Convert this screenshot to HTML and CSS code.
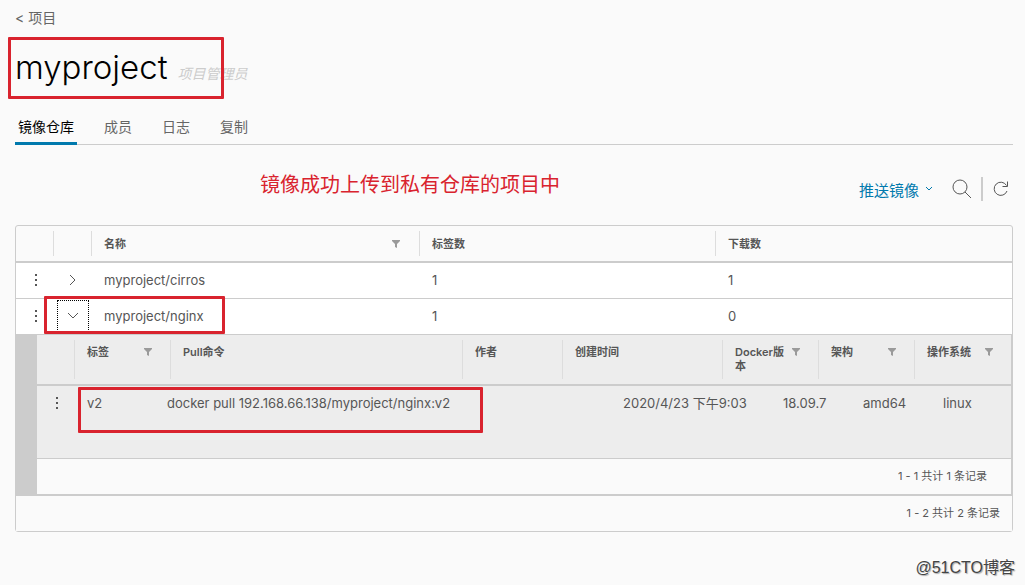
FILE: index.html
```html
<!DOCTYPE html>
<html lang="zh-CN">
<head>
  <meta charset="UTF-8">
  <meta name="viewport" content="width=device-width, initial-scale=1.0">
  <title>myproject</title>
  <link rel="stylesheet" href="styles.css">
</head>
<body>

<!-- shared icons -->
<svg class="sprite" aria-hidden="true">
  <symbol id="kebab" viewBox="0 0 4 14">
    <rect x="1" y="0" width="2" height="2"/><rect x="1" y="5" width="2" height="2"/><rect x="1" y="10" width="2" height="2"/>
  </symbol>
  <symbol id="filter" viewBox="0 0 8 8">
    <path d="M0 0h8v1L5 4v4L3 7V4L0 1z"/>
  </symbol>
</svg>

<main class="page">
  <a class="back" href="#">&lt; 项目</a>

  <div class="title">
    <h1>myproject</h1>
    <em>项目管理员</em>
    <span class="mark mark-title"></span>
  </div>

  <nav class="tabs">
    <a class="active" href="#">镜像仓库</a>
    <a href="#">成员</a>
    <a href="#">日志</a>
    <a href="#">复制</a>
  </nav>

  <div class="toolbar">
    <span class="note">镜像成功上传到私有仓库的项目中</span>
    <button class="push" type="button">推送镜像
      <svg width="8" height="6" viewBox="0 0 8 6"><path d="M1 1l3 3 3-3"/></svg>
    </button>
    <button class="search" type="button" aria-label="搜索">
      <svg width="20" height="20" viewBox="0 0 20 20"><circle cx="8" cy="8" r="7"/><path d="M13 13l6 6"/></svg>
    </button>
    <button class="refresh" type="button" aria-label="刷新">
      <svg width="16" height="16" viewBox="0 0 16 16"><path d="M14 10A6.600 6.600 0 1 1 13.500 4.500M14.500 0.500V5.500H9.500"/></svg>
    </button>
  </div>

  <div class="datagrid">
    <table class="repos">
      <thead>
        <tr>
          <th></th>
          <th><div></div></th>
          <th><div>名称 <button type="button" aria-label="筛选名称"><svg><use href="#filter"/></svg></button></div></th>
          <th><div>标签数</div></th>
          <th><div>下载数</div></th>
        </tr>
      </thead>
      <tbody>
        <tr>
          <td><button class="kebab" type="button" aria-label="操作"><svg><use href="#kebab"/></svg></button></td>
          <td><button class="caret" type="button" aria-label="展开"><svg width="8" height="12" viewBox="0 0 8 12"><path d="M1 1l5 5-5 5"/></svg></button></td>
          <td>myproject/cirros</td>
          <td>1</td>
          <td>1</td>
        </tr>
        <tr>
          <td><button class="kebab" type="button" aria-label="操作"><svg><use href="#kebab"/></svg></button></td>
          <td><span class="mark mark-repo"></span><button class="caret open" type="button" aria-label="收起"><svg width="12" height="8" viewBox="0 0 12 8"><path d="M1 1l5 5 5-5"/></svg></button></td>
          <td>myproject/nginx</td>
          <td>1</td>
          <td>0</td>
        </tr>
      </tbody>
    </table>

    <div class="detail">
      <table class="tags">
        <thead>
          <tr>
            <th></th>
            <th><span>标签</span><button type="button" aria-label="筛选标签"><svg><use href="#filter"/></svg></button></th>
            <th>Pull命令</th>
            <th>作者</th>
            <th>创建时间</th>
            <th><span>Docker版本</span><button type="button" aria-label="筛选Docker版本"><svg><use href="#filter"/></svg></button></th>
            <th><span>架构</span><button type="button" aria-label="筛选架构"><svg><use href="#filter"/></svg></button></th>
            <th><span>操作系统</span><button type="button" aria-label="筛选操作系统"><svg><use href="#filter"/></svg></button></th>
          </tr>
        </thead>
        <tbody>
          <tr>
            <td><span class="mark mark-tag"></span><button class="kebab" type="button" aria-label="操作"><svg><use href="#kebab"/></svg></button></td>
            <td>v2</td>
            <td>docker pull 192.168.66.138/myproject/nginx:v2</td>
            <td></td>
            <td>2020/4/23 下午9:03</td>
            <td>18.09.7</td>
            <td>amd64</td>
            <td>linux</td>
          </tr>
        </tbody>
      </table>
      <div class="count">1 - 1 共计 1 条记录</div>
    </div>

    <div class="count total">1 - 2 共计 2 条记录</div>
  </div>
</main>

<div class="watermark">@51CTO博客</div>

</body>
</html>
```
FILE: styles.css
```css
* {
    box-sizing: border-box;
}

body {
    margin: 0;
    min-height: 100vh;
    position: relative;
    background-color: #fafafa;
    color: #565656;
    font-family: Inter, "Noto Sans CJK SC", sans-serif;
    font-size: 13px;
}

.sprite {
    display: none;
}

.page {
    padding: 8px 12px 0 15px;
}

a {
    text-decoration: none;
    color: #666;
}

button {
    background: none;
    border: 0;
    padding: 0;
    color: inherit;
    font-family: inherit;
    display: flex;
    align-items: center;
    justify-content: center;
}

svg {
    fill: none;
    stroke: currentColor;
}

.back {
    display: block;
    font-size: 14px;
    line-height: 20px;
}

.title {
    position: relative;
    display: flex;
    align-items: baseline;
    gap: 10px;
    margin-top: 16px;
    height: 64px;
}

.title h1 {
    margin: 0;
    font-size: 33px;
    font-weight: 300;
    line-height: 46px;
    color: #000;
}

.title em {
    font-size: 14px;
    color: #ccc;
}

/* red frames */
.mark {
    position: absolute;
    border: 3px solid #d9232e;
    border-radius: 1px;
    pointer-events: none;
}

.mark-title {
    left: -7px;
    top: -7px;
    width: 216px;
    height: 62px;
}

.mark-repo {
    left: -9px;
    top: -3px;
    width: 181px;
    height: 38px;
}

.mark-tag {
    left: 41px;
    top: 1px;
    width: 405px;
    height: 46px;
}

.tabs {
    display: flex;
    gap: 24px;
    height: 37px;
    border-bottom: 1px solid #ccc;
}

.tabs a {
    height: 37px;
    padding: 0 3px;
    font-size: 14px;
    line-height: 38px;
}

.tabs .active {
    color: #000;
    border-bottom: 3px solid #0079ad;
}

.toolbar {
    position: relative;
    display: flex;
    justify-content: flex-end;
    align-items: center;
    height: 80px;
    padding: 8px 4px 0 0;
}

.note {
    position: absolute;
    left: 245px;
    top: 25px;
    font-size: 20px;
    line-height: 30px;
    color: #d9232e;
}

.push {
    gap: 6px;
    font-size: 15px;
    color: #0079ad;
}

.search {
    margin-left: 19px;
    padding-right: 9px;
}

.refresh {
    height: 24px;
    padding-left: 10px;
    border-left: 2px solid #ccc;
}

.datagrid {
    border: 1px solid #ccc;
    border-radius: 3px;
}

table {
    width: 100%;
    border-collapse: collapse;
}

tr {
    display: grid;
}

th {
    font-size: 11px;
    font-weight: 600;
    line-height: 14px;
    text-align: left;
    padding: 0;
}

th svg {
    width: 8px;
    height: 8px;
    fill: #9a9a9a;
    stroke: none;
}

td {
    position: relative;
    padding: 0 13px;
    line-height: 35px;
}

.kebab svg {
    width: 4px;
    height: 14px;
    fill: #565656;
    stroke: none;
}

.repos tr {
    grid-template-columns: 37px 38px 328fr 296fr 297fr;
}

.repos thead tr {
    height: 37px;
    border-bottom: 2px solid #ccc;
}

.repos th {
    padding: 5px 0;
}

.repos th div {
    display: flex;
    justify-content: space-between;
    align-items: center;
    height: 25px;
    padding: 0 19px 0 12px;
    border-left: 1px solid #ddd;
}

.repos tbody tr {
    height: 36px;
    background-color: #fff;
    border-bottom: 1px solid #ccc;
}

.repos td:first-child {
    padding: 0 0 0 2px;
}

.repos td:nth-child(2) {
    padding: 1px 0 0 4px;
}

.repos td .kebab {
    width: 36px;
    height: 35px;
}

.caret {
    width: 32px;
    height: 32px;
}

.caret.open {
    outline: 1px dotted #000;
    outline-offset: -1px;
}

.detail {
    border-left: 21px solid #ccc;
    border-right: 1px solid #ccc;
    border-bottom: 2px solid #ccc;
}

.tags {
    background-color: #ededed;
}

.tags thead tr {
    grid-template-columns: 37px 96px 1fr 100px 160px 96px 96px 97px;
    height: 51px;
    padding: 5px 0;
    border-bottom: 2px solid #ccc;
}

.tags th {
    display: flex;
    justify-content: space-between;
    align-items: flex-start;
    padding: 5px 18px 0 12px;
    border-left: 1px solid #ddd;
}

.tags th:first-child {
    border: 0;
}

.tags th button {
    height: 14px;
}

.tags tbody tr {
    grid-template-columns: 37px 80px 1fr 100px 160px 80px 80px 81px;
    height: 72px;
}

.tags td:first-child {
    padding: 0;
}

.tags td .kebab {
    width: 40px;
    height: 36px;
}

.count {
    height: 36px;
    padding-right: 24px;
    background-color: #fafafa;
    border-top: 1px solid #ccc;
    font-size: 11px;
    line-height: 34px;
    text-align: right;
}

.total {
    height: 35px;
    padding-right: 12px;
    border: 0;
}

.watermark {
    position: absolute;
    right: 10px;
    bottom: 6px;
    font-family: "Liberation Sans", "Noto Sans CJK SC", sans-serif;
    font-size: 16px;
    line-height: 22px;
    color: #444;
    text-shadow: -1px -1px 0 #fff, 1px 1px 1px #aaa;
}
```
